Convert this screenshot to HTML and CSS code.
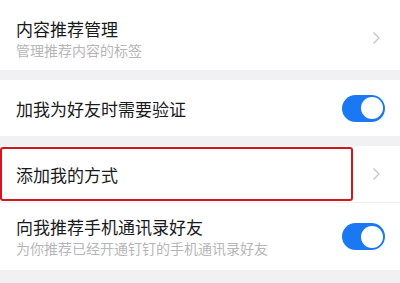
FILE: index.html
```html
<!DOCTYPE html>
<html lang="zh-CN">
<head>
  <meta charset="UTF-8">
  <meta name="viewport" content="width=device-width, initial-scale=1.0">
  <title>隐私设置</title>
  <link rel="stylesheet" href="styles.css">
</head>
<body>
<div class="page">
  <div class="group group-first">
    <div class="row row-tall">
      <div class="texts">
        <div class="title">内容推荐管理</div>
        <div class="sub">管理推荐内容的标签</div>
      </div>
      <svg class="chevron" width="9" height="14" viewBox="0 0 9 14"><path d="M1.5 1.5 L7 7 L1.5 12.5" fill="none" stroke="#c4c4c6" stroke-width="1.3"/></svg>
    </div>
  </div>

  <div class="group">
    <div class="row row-short">
      <div class="texts">
        <div class="title">加我为好友时需要验证</div>
      </div>
      <div class="switch on"><span class="knob"></span></div>
    </div>
  </div>

  <div class="group">
    <div class="row row-short marked">
      <div class="texts">
        <div class="title">添加我的方式</div>
      </div>
      <svg class="chevron" width="9" height="14" viewBox="0 0 9 14"><path d="M1.5 1.5 L7 7 L1.5 12.5" fill="none" stroke="#c4c4c6" stroke-width="1.3"/></svg>
      <div class="highlight"></div>
    </div>
    <div class="row row-tall divided">
      <div class="texts">
        <div class="title">向我推荐手机通讯录好友</div>
        <div class="sub">为你推荐已经开通钉钉的手机通讯录好友</div>
      </div>
      <div class="switch on"><span class="knob"></span></div>
    </div>
  </div>
</div>
</body>
</html>
```

FILE: styles.css
```css
body {
  margin: 0;
  padding: 0;
  background-color: #f1f1f3;
  font-family: "Noto Sans CJK SC", "Noto Sans", sans-serif;
}
.page {
  display: flex;
  flex-direction: column;
  gap: 10px;
}
.group {
  background-color: #fff;
}
.row {
  display: flex;
  align-items: center;
  justify-content: space-between;
  padding: 0 15px 0 16px;
  position: relative;
}
.row-tall {
  height: 67px;
}
.group-first .row-tall {
  height: 70px;
  padding-top: 6px;
  box-sizing: border-box;
}
.row-short {
  height: 56px;
}
.divided {
  border-top: 1px solid #eeeef0;
}
.texts {
  display: flex;
  flex-direction: column;
  gap: 2px;
}
.title {
  font-size: 17px;
  line-height: 21px;
  color: #1a1a1c;
}
.sub {
  font-size: 14px;
  line-height: 18px;
  color: #b6b6b8;
}
.chevron {
  margin-right: 4px;
}
.switch {
  width: 43px;
  height: 27px;
  border-radius: 14px;
  background-color: #1a78f2;
  position: relative;
}
.knob {
  position: absolute;
  top: 2.5px;
  right: 2.5px;
  width: 22px;
  height: 22px;
  border-radius: 50%;
  background-color: #fff;
}
.highlight {
  position: absolute;
  left: 0;
  top: 1px;
  width: 349px;
  height: 50px;
  border: 2.5px solid #cf181d;
  border-radius: 3px;
}
```
